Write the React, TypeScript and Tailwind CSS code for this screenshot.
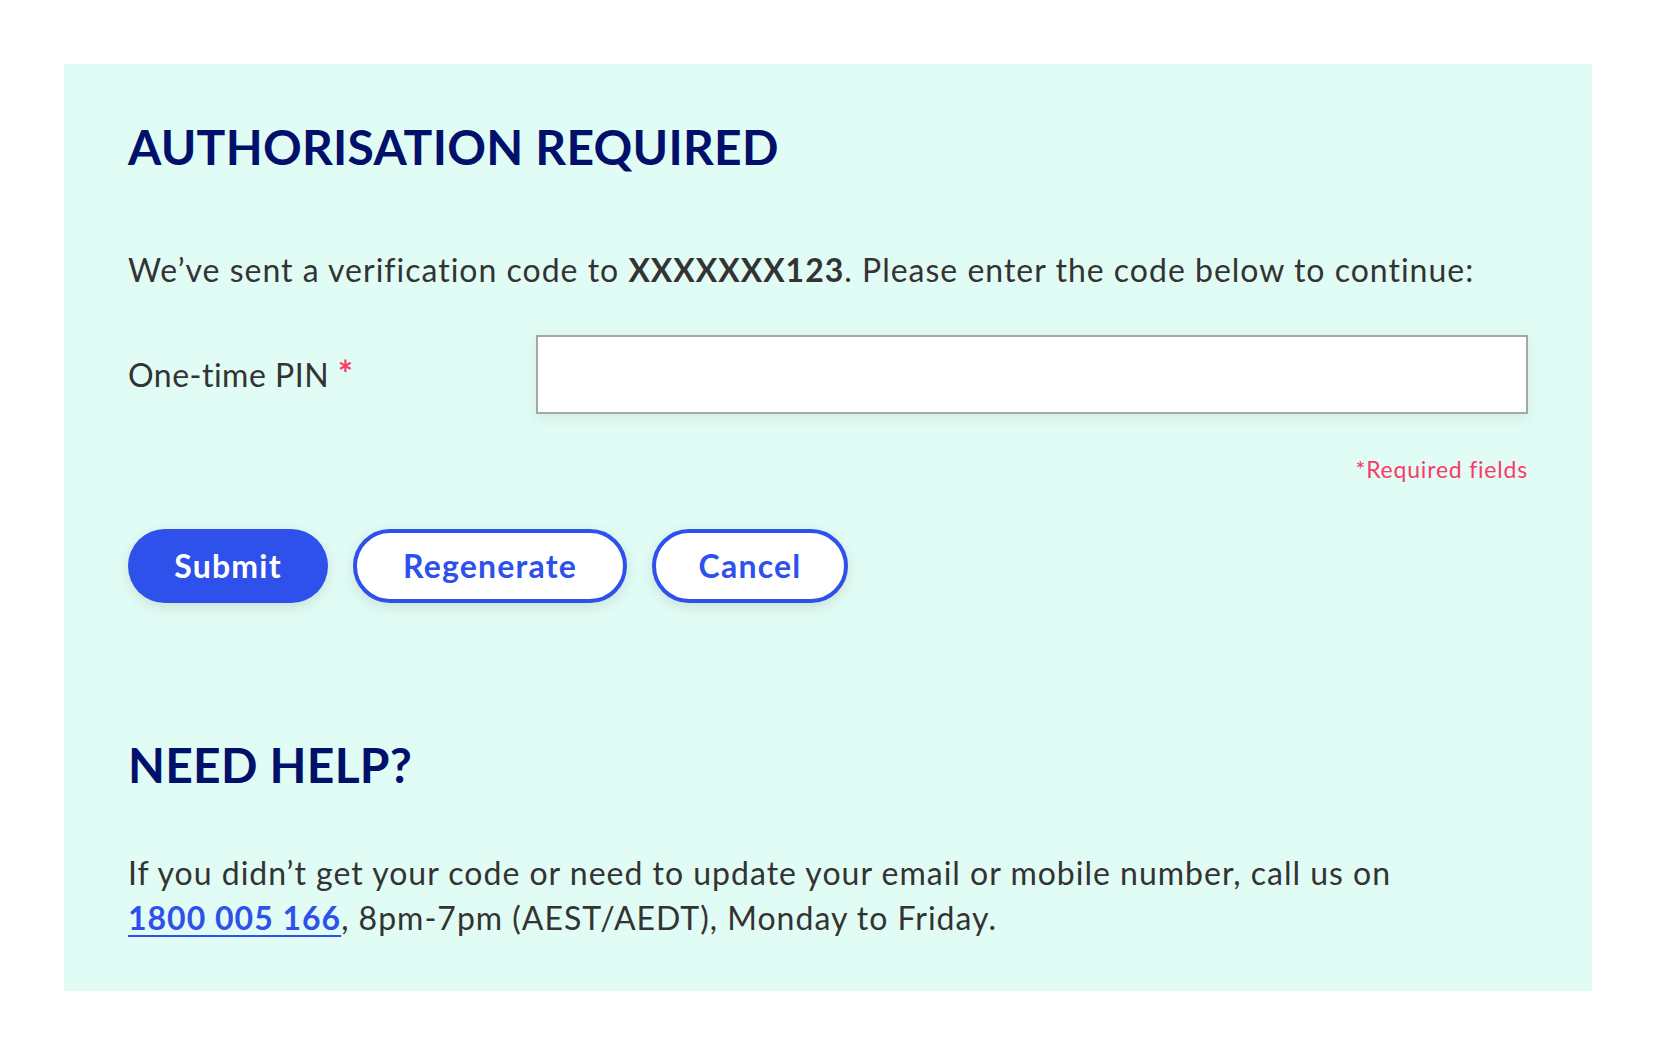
import React from "react";

export default function App() {
  return (
    <div className="min-h-[1054px] w-full bg-white p-[64px] font-['Lato','Liberation_Sans',sans-serif] text-[#333333]">
      <div className="bg-[#e1fcf4] pl-[64px] pr-[64px] pt-[55px] pb-[51px]">
        <h1 className="text-[48px] font-bold leading-[56px] tracking-[0.25px] text-[#00106b]">
          AUTHORISATION REQUIRED
        </h1>

        <p className="mt-[72px] text-[32px] leading-[45px] tracking-[1px]">
          We’ve sent a verification code to <strong className="font-bold">XXXXXXX123</strong>. Please enter the code below to continue:
        </p>

        <div className="mt-[43px] grid grid-cols-[408px_1fr] items-center">
          <label htmlFor="otp" className="text-[32px] leading-[45px] tracking-[0.5px]">
            One-time PIN <span className="text-[36px] font-bold leading-none text-[#fa3a6b]">*</span>
          </label>
          <input
            id="otp"
            type="text"
            className="h-[79px] w-full border-2 border-[#a6a6a6] bg-white px-4 text-[32px] shadow-[0_4px_14px_rgba(0,0,0,0.07)] outline-none"
          />
        </div>

        <p className="mt-[40px] text-right text-[23px] leading-[30px] tracking-[0.8px] text-[#fa3a6b]">*Required fields</p>

        <div className="mt-[45px] flex gap-[25px]">
          <button className="h-[74px] w-[200px] rounded-full bg-[#2e50eb] text-[32px] font-bold tracking-[1.2px] text-white shadow-[0_4px_14px_rgba(0,0,0,0.1)]">
            Submit
          </button>
          <button className="h-[74px] w-[274px] rounded-full border-4 border-[#2e50eb] bg-white text-[32px] font-bold tracking-[1.2px] text-[#2e50eb] shadow-[0_4px_14px_rgba(0,0,0,0.1)]">
            Regenerate
          </button>
          <button className="h-[74px] w-[196px] rounded-full border-4 border-[#2e50eb] bg-white text-[32px] font-bold tracking-[1.2px] text-[#2e50eb] shadow-[0_4px_14px_rgba(0,0,0,0.1)]">
            Cancel
          </button>
        </div>

        <h2 className="mt-[134px] text-[48px] font-bold leading-[56px] tracking-[0.25px] text-[#00106b]">NEED HELP?</h2>

        <p className="mt-[57px] text-[32px] leading-[45px] tracking-[1px]">
          If you didn’t get your code or need to update your email or mobile number, call us on{" "}
          <a href="#" className="whitespace-nowrap font-bold text-[#2e50eb] underline decoration-2 underline-offset-[5px]">
            1800 005 166
          </a>
          , 8pm-7pm (AEST/AEDT), Monday to Friday.
        </p>
      </div>
    </div>
  );
}
